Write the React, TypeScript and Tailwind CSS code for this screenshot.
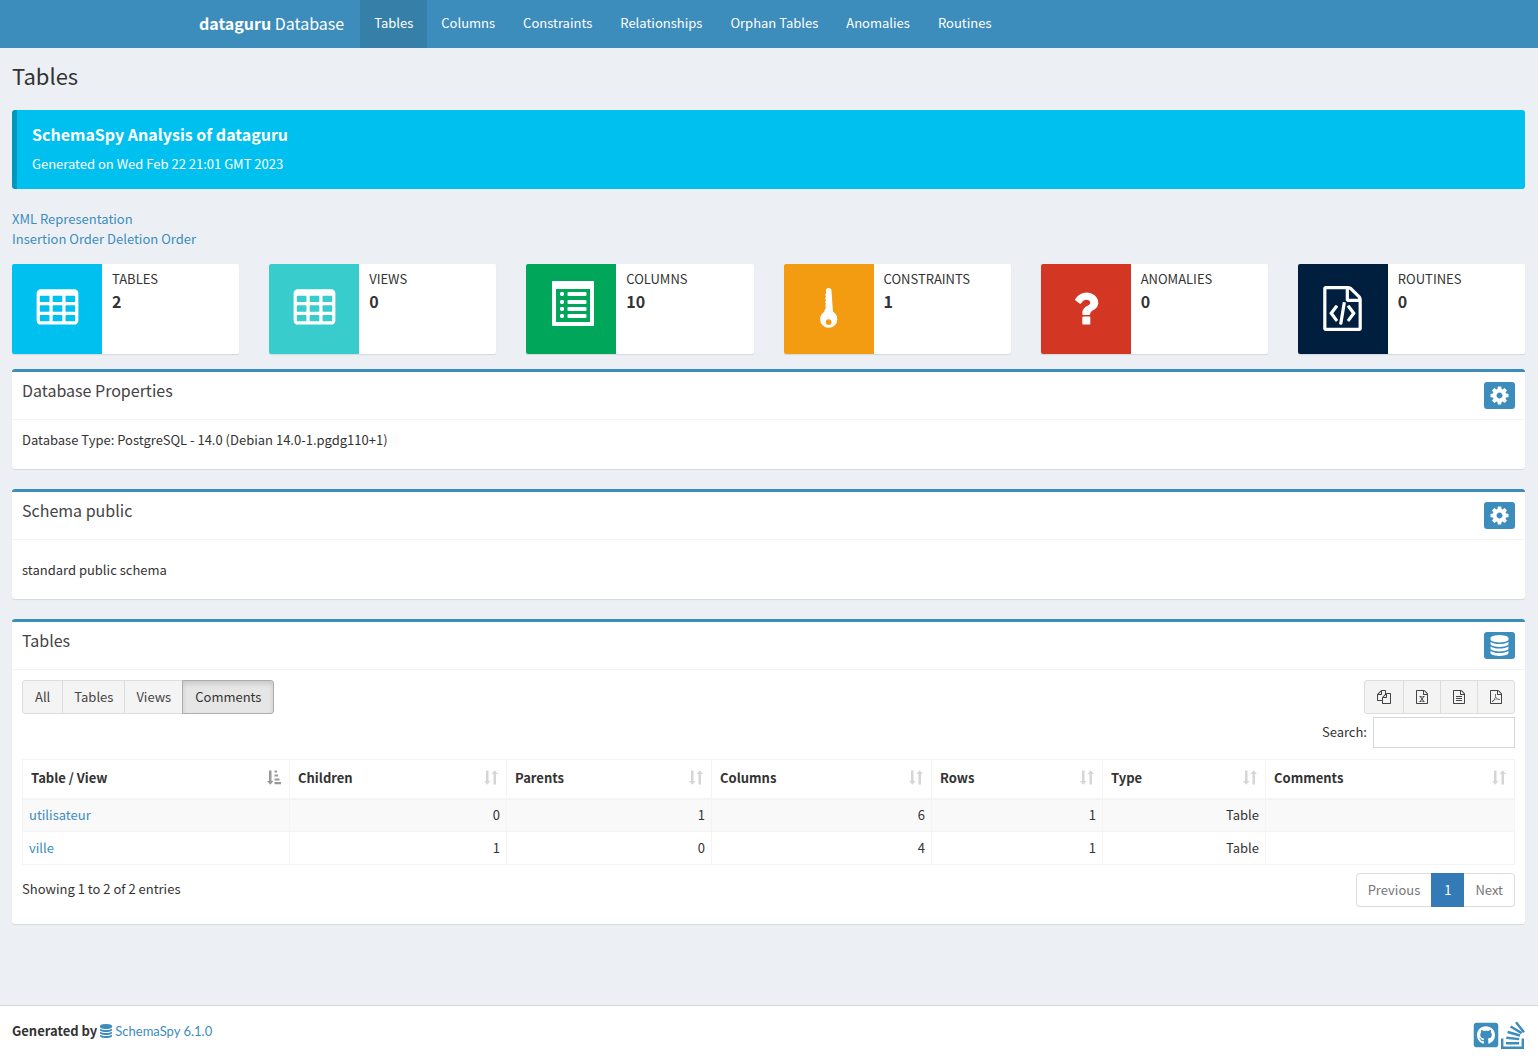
import { useState } from 'react';
import { FaGithubSquare } from 'react-icons/fa';

// ==========================================
// ICONS
// ==========================================
const FILE_FRAME =
  'M1596 380q28 28 48 76t20 88v1152q0 40-28 68t-68 28h-1344q-40 0-68-28t-28-68v-1600q0-40 28-68t68-28h896q40 0 88 20t76 48zm-444-244v376h376q-10-29-22-41l-313-313q-12-12-41-22zm384 1528v-1024h-416q-40 0-68-28t-28-68v-416h-768v1536h1280z';

const PATHS = {
  table:
    'M576 1376v-192q0-14-9-23t-23-9h-320q-14 0-23 9t-9 23v192q0 14 9 23t23 9h320q14 0 23-9t9-23zm0-384v-192q0-14-9-23t-23-9h-320q-14 0-23 9t-9 23v192q0 14 9 23t23 9h320q14 0 23-9t9-23zm512 384v-192q0-14-9-23t-23-9h-320q-14 0-23 9t-9 23v192q0 14 9 23t23 9h320q14 0 23-9t9-23zm-512-768v-192q0-14-9-23t-23-9h-320q-14 0-23 9t-9 23v192q0 14 9 23t23 9h320q14 0 23-9t9-23zm512 384v-192q0-14-9-23t-23-9h-320q-14 0-23 9t-9 23v192q0 14 9 23t23 9h320q14 0 23-9t9-23zm512 384v-192q0-14-9-23t-23-9h-320q-14 0-23 9t-9 23v192q0 14 9 23t23 9h320q14 0 23-9t9-23zm-512-768v-192q0-14-9-23t-23-9h-320q-14 0-23 9t-9 23v192q0 14 9 23t23 9h320q14 0 23-9t9-23zm512 384v-192q0-14-9-23t-23-9h-320q-14 0-23 9t-9 23v192q0 14 9 23t23 9h320q14 0 23-9t9-23zm0-384v-192q0-14-9-23t-23-9h-320q-14 0-23 9t-9 23v192q0 14 9 23t23 9h320q14 0 23-9t9-23zm128-320v1088q0 66-47 113t-113 47h-1344q-66 0-113-47t-47-113v-1088q0-66 47-113t113-47h1344q66 0 113 47t47 113z',
  question:
    'M1088 1256v240q0 16-12 28t-28 12h-240q-16 0-28-12t-12-28v-240q0-16 12-28t28-12h240q16 0 28 12t12 28zm316-600q0 54-15.5 101t-35 76.5-55 59.5-57.5 43.5-61 35.5q-41 23-68.5 65t-27.5 67q0 17-12 32.5t-28 15.5h-240q-15 0-25.5-18.5t-10.5-37.5v-45q0-83 65-156.5t143-108.5q59-27 84-56t25-76q0-42-46.5-74t-107.5-32q-65 0-108 29-35 25-107 115-13 16-31 16-12 0-25-8l-164-125q-13-10-15.5-25t5.5-28q160-266 464-266 80 0 161 31t146 83 106 127.5 41 158.5z',
  code:
    FILE_FRAME +
    'm-928-896q8-11 21-12.5t24 6.5l51 38q11 8 12.5 21t-6.5 24l-182 243 182 243q8 11 6.5 24t-12.5 21l-51 38q-11 8-24 6.5t-21-12.5l-226-301q-14-19 0-38zm802 301q14 19 0 38l-226 301q-8 11-21 12.5t-24-6.5l-51-38q-11-8-12.5-21t6.5-24l182-243-182-243q-8-11-6.5-24t12.5-21l51-38q11-8 24-6.5t21 12.5zm-620 461q-13-2-20.5-13t-5.5-24l138-831q2-13 13-20.5t24-5.5l63 10q13 2 20.5 13t5.5 24l-138 831q-2 13-13 20.5t-24 5.5z',
  cog:
    'M1152 896q0-106-75-181t-181-75-181 75-75 181 75 181 181 75 181-75 75-181zm512-109v222q0 12-8 23t-20 13l-185 28q-19 54-39 91 35 50 107 138 10 12 10 25t-9 23q-27 37-99 108t-94 71q-12 0-26-9l-138-108q-44 23-91 38-16 136-29 186-7 28-36 28h-222q-14 0-24.5-8.5t-11.5-21.5l-28-184q-49-16-90-37l-141 107q-10 9-25 9-14 0-25-11-126-114-165-168-7-10-7-23 0-12 8-23 15-21 51-66.5t54-70.5q-27-50-41-99l-183-27q-13-2-21-12.5t-8-23.5v-222q0-12 8-23t19-13l186-28q14-46 39-92-40-57-107-138-10-12-10-24 0-10 9-23 26-36 98.5-107.5t94.5-71.5q13 0 26 10l138 107q44-23 91-38 16-136 29-186 7-28 36-28h222q14 0 24.5 8.5t11.5 21.5l28 184q49 16 90 37l142-107q9-9 24-9 13 0 25 10 129 119 165 170 7 8 7 22 0 12-8 23-15 21-51 66.5t-54 70.5q26 50 41 98l183 28q13 2 21 12.5t8 23.5z',
  database:
    'M896 768q237 0 443-43t325-127v170q0 69-103 128t-280 93.5-385 34.5-385-34.5-280-93.5-103-128v-170q119 84 325 127t443 43zm0 768q237 0 443-43t325-127v170q0 69-103 128t-280 93.5-385 34.5-385-34.5-280-93.5-103-128v-170q119 84 325 127t443 43zm0-384q237 0 443-43t325-127v170q0 69-103 128t-280 93.5-385 34.5-385-34.5-280-93.5-103-128v-170q119 84 325 127t443 43zm0-1152q208 0 385 34.5t280 93.5 103 128v128q0 69-103 128t-280 93.5-385 34.5-385-34.5-280-93.5-103-128v-128q0-69 103-128t280-93.5 385-34.5z',
  copy:
    'M1696 384q40 0 68 28t28 68v1216q0 40-28 68t-68 28h-960q-40 0-68-28t-28-68v-288h-544q-40 0-68-28t-28-68v-672q0-40 20-88t48-76l408-408q28-28 76-48t88-20h416q40 0 68 28t28 68v328q68-40 128-40h416zm-544 213l-299 299h299v-299zm-640-384l-299 299h299v-299zm196 647l316-316v-416h-384v416q0 40-28 68t-68 28h-416v640h512v-256q0-40 20-88t48-76zm956 804v-1152h-384v416q0 40-28 68t-68 28h-416v640h896z',
  excel:
    FILE_FRAME +
    'm-979-234v106h281v-106h-75l103-161q5-7 10-16.5t7.5-13.5 3.5-4h2q1 4 5 10 2 4 4.500 7.500t6 8 6.500 8.500l107 161h-76v106h291v-106h-68l-192-273 195-282h67v-107h-279v107h74l-103 159q-4 7-10 16.5t-9 13.5l-2 3h-2q-1-4-5-10-6-11-17-23l-106-159h76v-107h-290v107h68l189 272-194 283h-68z',
  text:
    FILE_FRAME +
    'M512 800q0-14 9-23t23-9h704q14 0 23 9t9 23v64q0 14-9 23t-23 9h-704q-14 0-23-9t-9-23v-64zm736 224q14 0 23 9t9 23v64q0 14-9 23t-23 9h-704q-14 0-23-9t-9-23v-64q0-14 9-23t23-9h704zm0 256q14 0 23 9t9 23v64q0 14-9 23t-23 9h-704q-14 0-23-9t-9-23v-64q0-14 9-23t23-9h704z',
  pdf:
    FILE_FRAME +
    'm-514-593q33 26 84 56 59-7 117-7 147 0 177 49 16 22 2 52 0 1-1 2l-2 2v1q-6 38-71 38-48 0-115-20t-130-53q-221 24-392 83-153 262-242 262-15 0-28-7l-24-12q-1-1-6-5-10-10-6-36 9-40 56-91.5t132-96.5q14-9 23 6 2 2 2 4 52-85 107-197 68-136 104-262-24-82-30.5-159.5t6.5-127.5q11-40 42-40h22q23 0 35 15 18 21 9 68-2 6-4 8 1 3 1 8v30q-2 123-14 192 55 164 146 238zm-576 411q52-24 137-158-51 40-87.5 84t-49.5 74zm398-920q-15 42-2 132 1-7 7-44 0-3 7-43 1-4 4-8-1-1-1-2t-1-2-1-3q-1-22-13-36 0 1-1 2v2zm-124 661q135-54 284-81-2-1-13-9.5t-16-13.5q-76-67-127-176-27 86-83 197-30 56-45 83zm646-16q-24-24-140-24 76 28 124 28 14 0 18-1 0-1-2-3z',
};

type IconName = keyof typeof PATHS;

const Icon = ({ name, className }: { name: IconName; className: string }) => (
  <svg viewBox="0 0 1792 1792" fill="currentColor" className={className} aria-hidden="true">
    <path d={PATHS[name]} />
  </svg>
);

const ListIcon = () => (
  <svg viewBox="0 0 42 45" className="mb-[10px] ml-1 h-[45px] w-[42px]" aria-hidden="true">
    <path
      fill="currentColor"
      fillRule="evenodd"
      d="M1 0h40a1 1 0 0 1 1 1v43a1 1 0 0 1-1 1H1a1 1 0 0 1-1-1V1a1 1 0 0 1 1-1zM4 8v33h34V8z"
    />
    {[11, 19, 26, 33].map((y) => (
      <g key={y} fill="currentColor">
        <rect x="8" y={y} width="4" height="4" rx="1.4" />
        <rect x="15.5" y={y} width="19" height="4" rx="1" />
      </g>
    ))}
  </svg>
);

const KeyIcon = () => (
  <svg viewBox="0 0 18 40" className="h-[40px] w-[18px]" aria-hidden="true">
    <path
      fill="currentColor"
      fillRule="evenodd"
      d="M6 2.2C6 1 7.200 0 8.700 0s2.600.8 2.700 2.100L13 23.800c2.500 1.500 4.300 4.200 4.300 7.400a8.600 8.600 0 0 1-17.200 0c0-3 1.500-5.600 3.900-7.200L6 19l-.9-1.600L6 16l-.9-1.700.9-2-.9-1.800.9-2L5.100 6.700 6.200 5zM8.700 31.200a2.900 2.900 0 1 0 0 5.800 2.900 2.900 0 0 0 0-5.800z"
    />
  </svg>
);

const StackOverflowIcon = () => (
  <svg viewBox="0 0 24 28" fill="none" stroke="currentColor" strokeWidth="2.4" className="h-7 w-6" aria-hidden="true">
    <path d="M1.200 17.500v9.200h20.600v-9.200" />
    <path d="M5 22.200h13M5.300 16.800l12.900 1.300M6.600 11l12.400 3.500M9.600 5.500l11.100 6.600M15 1.200l8 10" />
  </svg>
);

const SortIcon = ({ active }: { active: boolean }) => (
  <svg
    viewBox="0 0 14 15"
    fill="currentColor"
    className={`h-[15px] w-[14px] ${active ? 'text-[#999]' : 'text-[#d6d6d6]'}`}
    aria-hidden="true"
  >
    <path d="M2 .5h2.500V11h2L3.300 14.700 0 11h2z" />
    {active ? (
      <path d="M7.500.5h2.500v2H7.500zM7.500 4.500h3.500v2H7.500zM7.500 8.500h5v2h-5zM7.500 12h6.500v2.200H7.500z" />
    ) : (
      <path d="M9.500 14.500V4h-2l3.200-3.700L14 4h-2v10.500z" />
    )}
  </svg>
);

// ==========================================
// DATA
// ==========================================
const navItems = ['Tables', 'Columns', 'Constraints', 'Relationships', 'Orphan Tables', 'Anomalies', 'Routines'];

const stats = [
  { label: 'TABLES', value: 2, bg: 'bg-[#00c0ef]', icon: <Icon name="table" className="size-[45px]" /> },
  { label: 'VIEWS', value: 0, bg: 'bg-[#39cccc]', icon: <Icon name="table" className="size-[45px]" /> },
  { label: 'COLUMNS', value: 10, bg: 'bg-[#00a65a]', icon: <ListIcon /> },
  { label: 'CONSTRAINTS', value: 1, bg: 'bg-[#f39c12]', icon: <KeyIcon /> },
  { label: 'ANOMALIES', value: 0, bg: 'bg-[#d33724]', icon: <Icon name="question" className="size-[45px]" /> },
  { label: 'ROUTINES', value: 0, bg: 'bg-[#001f3f]', icon: <Icon name="code" className="size-[45px]" /> },
];

const columns = [
  { title: 'Table / View', width: 'w-[267px]' },
  { title: 'Children', width: 'w-[217px]' },
  { title: 'Parents', width: 'w-[205px]' },
  { title: 'Columns', width: 'w-[220px]' },
  { title: 'Rows', width: 'w-[171px]' },
  { title: 'Type', width: 'w-[163px]' },
  { title: 'Comments', width: '' },
];

const rows = [
  { name: 'utilisateur', cells: ['0', '1', '6', '1', 'Table', ''] },
  { name: 'ville', cells: ['1', '0', '4', '1', 'Table', ''] },
];

const filters = ['All', 'Tables', 'Views', 'Comments'];

const exportButtons: { icon: IconName; label: string }[] = [
  { icon: 'copy', label: 'Copy' },
  { icon: 'excel', label: 'Excel' },
  { icon: 'text', label: 'CSV' },
  { icon: 'pdf', label: 'PDF' },
];

// ==========================================
// COMPONENTS
// ==========================================
const Box = ({ title, icon, children }: { title: string; icon: IconName; children: React.ReactNode }) => (
  <section className="mb-5 rounded-[3px] border-t-3 border-[#3c8dbc] bg-white shadow-[0_1px_1px_rgba(0,0,0,0.1)]">
    <div className="flex items-start justify-between border-b border-[#f4f4f4] p-[10px]">
      <h2 className="text-base leading-4 text-[#444]">{title}</h2>
      <button
        type="button"
        aria-label={title}
        className="flex h-[27px] w-[31px] items-center justify-center rounded-[3px] bg-[#3c8dbc] text-white"
      >
        <Icon name={icon} className="size-[21px]" />
      </button>
    </div>
    {children}
  </section>
);

const StatCard = ({ label, value, bg, icon }: (typeof stats)[number]) => (
  <div className="flex h-[90px] overflow-hidden rounded-[2px] bg-white shadow-[0_1px_1px_rgba(0,0,0,0.1)]">
    <div className={`flex w-[90px] shrink-0 items-center justify-center pb-[2px] text-white ${bg}`}>{icon}</div>
    <div className="px-[10px] pt-[5px]">
      <div className="leading-5">{label}</div>
      <div className="text-base leading-6 font-bold">{value}</div>
    </div>
  </div>
);

export default function App() {
  const [filter, setFilter] = useState('Comments');

  return (
    <div className="flex min-h-screen flex-col bg-[#ecf0f5] font-['Noto_Sans_CJK_SC',sans-serif] text-[13px] leading-5 text-[#333]">
      <header className="bg-[#3c8dbc] text-white">
        <nav className="mx-auto flex h-12 max-w-[1170px]">
          <a href="#" className="flex items-center pr-4 pb-[3px] pl-[15px] text-base">
            <span>
              <b>dataguru</b> Database
            </span>
          </a>
          {navItems.map((item, i) => (
            <a key={item} href="#" className={`flex items-center px-[14px] pb-[2px] ${i === 0 ? 'bg-[#367fa9]' : ''}`}>
              {item}
            </a>
          ))}
        </nav>
      </header>

      <main className="flex-grow pr-[13px] pl-3">
        <h1 className="pt-[14px] text-[22px] leading-[26px]">Tables</h1>

        <div className="mt-[22px] rounded-[3px] border-l-5 border-[#0097bc] bg-[#00c0ef] px-[15px] pt-[14px] pb-[15px] text-white">
          <h4 className="mb-[10px] text-base leading-5 font-bold">SchemaSpy Analysis of dataguru</h4>
          <p>Generated on Wed Feb 22 21:01 GMT 2023</p>
        </div>

        <div className="mt-5 pb-[15px] text-[#3c8dbc]">
          <a href="#" className="block w-fit">XML Representation</a>
          <a href="#">Insertion Order</a> <a href="#">Deletion Order</a>
        </div>

        <div className="mb-[15px] grid grid-cols-6 gap-[30px]">
          {stats.map((stat) => (
            <StatCard key={stat.label} {...stat} />
          ))}
        </div>

        <Box title="Database Properties" icon="cog">
          <p className="px-[10px] pt-[10px] pb-[19px]">Database Type: PostgreSQL - 14.0 (Debian 14.0-1.pgdg110+1)</p>
        </Box>

        <Box title="Schema public" icon="cog">
          <p className="px-[10px] pt-5 pb-[19px]">standard public schema</p>
        </Box>

        <Box title="Tables" icon="database">
          <div className="px-[10px] pt-[10px] pb-[17px]">
            <div className="flex items-start justify-between">
              <div className="flex">
                {filters.map((name) => (
                  <button
                    key={name}
                    type="button"
                    onClick={() => setFilter(name)}
                    className={`-ml-px h-[34px] border px-[11px] first:ml-0 first:rounded-l-[3px] first:px-3 last:rounded-r-[3px] last:px-3 ${
                      name === filter
                        ? 'border-[#adadad] bg-[#e6e6e6] shadow-[inset_0_3px_5px_rgba(0,0,0,0.125)]'
                        : 'border-[#ddd] bg-[#f4f4f4] text-[#444]'
                    }`}
                  >
                    {name}
                  </button>
                ))}
              </div>
              <div className="flex">
                {exportButtons.map(({ icon, label }) => (
                  <button
                    key={label}
                    type="button"
                    aria-label={label}
                    className="-ml-px flex h-[34px] items-center border border-[#ddd] bg-[#f4f4f4] px-[11px] text-[#444] first:ml-0 first:rounded-l-[3px] first:px-3 last:rounded-r-[3px]"
                  >
                    <Icon name={icon} className="size-[14px]" />
                  </button>
                ))}
              </div>
            </div>

            <div className="mt-[3px] flex justify-end">
              <label htmlFor="search" className="mr-[6px] leading-[30px]">Search:</label>
              <input id="search" type="search" className="h-[31px] w-[142px] border border-[#d2d6de] bg-white px-[10px] outline-none" />
            </div>

            <table className="mt-[11px] w-full table-fixed border-collapse border border-[#f4f4f4]">
              <thead>
                <tr>
                  {columns.map(({ title, width }, i) => (
                    <th key={title} className={`h-[39px] border border-b-2 border-[#f4f4f4] px-2 pb-[2px] text-left font-bold ${width}`}>
                      <div className="flex items-center justify-between">
                        {title}
                        <SortIcon active={i === 0} />
                      </div>
                    </th>
                  ))}
                </tr>
              </thead>
              <tbody>
                {rows.map(({ name, cells }) => (
                  <tr key={name} className="h-[33px] odd:bg-[#f9f9f9]">
                    <td className="border border-[#f4f4f4] px-[6px]">
                      <a href="#" className="text-[#3c8dbc]">{name}</a>
                    </td>
                    {cells.map((cell, i) => (
                      <td key={i} className="border border-[#f4f4f4] px-[6px] text-right">{cell}</td>
                    ))}
                  </tr>
                ))}
              </tbody>
            </table>

            <div className="mt-2 flex items-start justify-between">
              <p className="pt-[6px]">Showing 1 to 2 of 2 entries</p>
              <div className="flex text-[#777]">
                <button type="button" className="h-[34px] rounded-l-[4px] border border-r-0 border-[#ddd] px-[11px]">Previous</button>
                <button type="button" className="h-[34px] bg-[#337ab7] px-[13px] text-white">1</button>
                <button type="button" className="h-[34px] rounded-r-[4px] border border-l-0 border-[#ddd] px-[11px]">Next</button>
              </div>
            </div>
          </div>
        </Box>
      </main>

      <footer className="flex h-[51px] items-start justify-between border-t border-[#d2d6de] bg-white pt-[15px] pr-[13px] pl-3">
        <div className="flex items-center font-bold">
          Generated by
          <Icon name="database" className="mx-[2px] size-[14px] text-[#3c8dbc]" />
          <a href="#" className="font-['Lato',cursive] font-normal text-[#3c8dbc]">SchemaSpy 6.1.0</a>
        </div>
        <div className="flex gap-px text-[#3c8dbc]">
          <a href="#" aria-label="GitHub"><FaGithubSquare className="size-7" /></a>
          <a href="#" aria-label="Stack Overflow"><StackOverflowIcon /></a>
        </div>
      </footer>
    </div>
  );
}
